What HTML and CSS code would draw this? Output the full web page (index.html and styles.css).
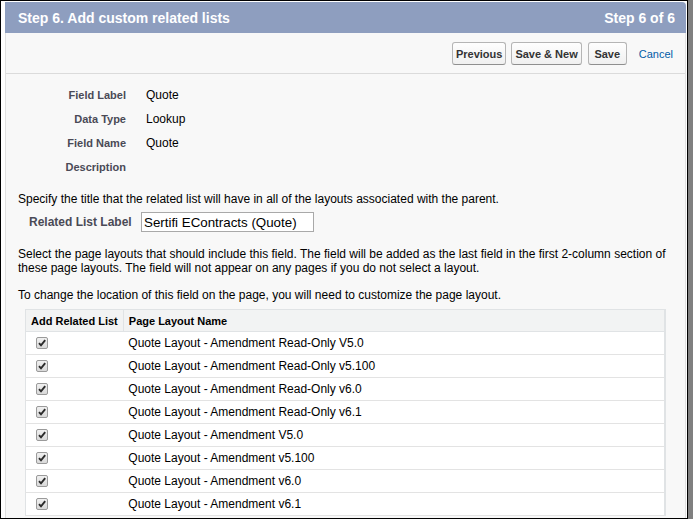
FILE: index.html
```html
<!DOCTYPE html>
<html>
<head>
<meta charset="utf-8">
<link rel="stylesheet" href="styles.css">
</head>
<body>
<div class="window">
  <div class="panel">
    <div class="pb-header">
      <h2 class="pb-title">Step 6. Add custom related lists</h2>
      <span class="pb-step">Step 6 of 6</span>
    </div>
    <div class="pb-body">
      <div class="btn-row">
        <button class="btn">Previous</button>
        <button class="btn">Save &amp; New</button>
        <button class="btn btn-save">Save</button>
        <a class="cancel" href="#">Cancel</a>
      </div>
      <div class="detail">
        <div class="lbl">Field Label</div><div class="val">Quote</div>
        <div class="lbl">Data Type</div><div class="val">Lookup</div>
        <div class="lbl">Field Name</div><div class="val">Quote</div>
        <div class="lbl">Description</div><div class="val"></div>
      </div>
      <p class="txt spec">Specify the title that the related list will have in all of the layouts associated with the parent.</p>
      <div class="rl-row">
        <label class="rl-label">Related List Label</label>
        <input class="rl-input" type="text" value="Sertifi EContracts (Quote)">
      </div>
      <p class="txt sel">Select the page layouts that should include this field. The field will be added as the last field in the first 2-column section of these page layouts. The field will not appear on any pages if you do not select a layout.</p>
      <p class="txt chg">To change the location of this field on the page, you will need to customize the page layout.</p>
      <table class="list">
        <thead>
          <tr><th class="c1">Add Related List</th><th class="c2">Page Layout Name</th></tr>
        </thead>
        <tbody>
          <tr><td class="c1"><span class="cb"><svg width="12" height="12" viewBox="0 0 12 12"><path d="M3 6.2 L5 8.4 L9.2 3.2" fill="none" stroke="#2b2b2b" stroke-width="1.9"/></svg></span></td><td class="c2">Quote Layout - Amendment Read-Only V5.0</td></tr>
          <tr><td class="c1"><span class="cb"><svg width="12" height="12" viewBox="0 0 12 12"><path d="M3 6.2 L5 8.4 L9.2 3.2" fill="none" stroke="#2b2b2b" stroke-width="1.9"/></svg></span></td><td class="c2">Quote Layout - Amendment Read-Only v5.100</td></tr>
          <tr><td class="c1"><span class="cb"><svg width="12" height="12" viewBox="0 0 12 12"><path d="M3 6.2 L5 8.4 L9.2 3.2" fill="none" stroke="#2b2b2b" stroke-width="1.9"/></svg></span></td><td class="c2">Quote Layout - Amendment Read-Only v6.0</td></tr>
          <tr><td class="c1"><span class="cb"><svg width="12" height="12" viewBox="0 0 12 12"><path d="M3 6.2 L5 8.4 L9.2 3.2" fill="none" stroke="#2b2b2b" stroke-width="1.9"/></svg></span></td><td class="c2">Quote Layout - Amendment Read-Only v6.1</td></tr>
          <tr><td class="c1"><span class="cb"><svg width="12" height="12" viewBox="0 0 12 12"><path d="M3 6.2 L5 8.4 L9.2 3.2" fill="none" stroke="#2b2b2b" stroke-width="1.9"/></svg></span></td><td class="c2">Quote Layout - Amendment V5.0</td></tr>
          <tr><td class="c1"><span class="cb"><svg width="12" height="12" viewBox="0 0 12 12"><path d="M3 6.2 L5 8.4 L9.2 3.2" fill="none" stroke="#2b2b2b" stroke-width="1.9"/></svg></span></td><td class="c2">Quote Layout - Amendment v5.100</td></tr>
          <tr><td class="c1"><span class="cb"><svg width="12" height="12" viewBox="0 0 12 12"><path d="M3 6.2 L5 8.4 L9.2 3.2" fill="none" stroke="#2b2b2b" stroke-width="1.9"/></svg></span></td><td class="c2">Quote Layout - Amendment v6.0</td></tr>
          <tr><td class="c1"><span class="cb"><svg width="12" height="12" viewBox="0 0 12 12"><path d="M3 6.2 L5 8.4 L9.2 3.2" fill="none" stroke="#2b2b2b" stroke-width="1.9"/></svg></span></td><td class="c2">Quote Layout - Amendment v6.1</td></tr>
        </tbody>
      </table>
    </div>
  </div>
</div>
</body>
</html>
```

FILE: styles.css
```css
html, body {
  margin: 0;
  padding: 0;
  background: #808080;
  font-family: "Liberation Sans", Arial, sans-serif;
  overflow: hidden;
}
.window {
  box-sizing: border-box;
  width: 688px;
  height: 519px;
  border: 1px solid #000;
  background: #fff;
  padding: 1px 1px 0 4px;
  overflow: hidden;
}
.panel {
  background: #f8f8f8;
  height: 600px;
}
.pb-header {
  height: 31px;
  background: #8e9ebf;
  border-radius: 0 4px 0 0;
  display: flex;
  align-items: center;
  justify-content: space-between;
  padding: 0 11px 0 13px;
  color: #fff;
  font-weight: bold;
  font-size: 14px;
}
.pb-title {
  margin: 0;
  font-size: 14px;
  font-weight: bold;
}
.pb-body {
  border-left: 1px solid #e0e0e0;
  border-right: 1px solid #e0e0e0;
  height: 600px;
}
.btn-row {
  display: flex;
  justify-content: flex-end;
  align-items: center;
  padding: 9px 12px 8px 0;
  border-bottom: 1px solid #dbdbdb;
}
.btn {
  font-family: "Liberation Sans", Arial, sans-serif;
  font-size: 11px;
  font-weight: bold;
  color: #333;
  height: 23px;
  padding: 0 3px;
  margin-left: 5px;
  border: 1px solid #b5b5b5;
  border-bottom-color: #8f8f8f;
  border-radius: 3px;
  background: linear-gradient(#fefefe, #f0f0f0);
}
.btn-save {
  min-width: 39px;
  margin-left: 6px;
}
.cancel {
  margin-left: 12px;
  font-size: 11px;
  color: #015ba7;
  text-decoration: none;
}
.detail {
  display: grid;
  grid-template-columns: 120px 1fr;
  grid-auto-rows: 24px;
  column-gap: 20px;
  padding-top: 9px;
  align-items: center;
}
.lbl {
  text-align: right;
  font-size: 11px;
  font-weight: bold;
  color: #4a4a56;
}
.val {
  font-size: 12px;
  color: #000;
}
.txt {
  margin: 0;
  padding-left: 12px;
  font-size: 12px;
  line-height: 14px;
  color: #000;
}
.spec {
  margin-top: 13px;
}
.rl-row {
  display: flex;
  align-items: center;
  margin-top: 6px;
  padding-left: 23px;
}
.rl-label {
  font-size: 12px;
  font-weight: bold;
  color: #4a4a56;
  width: 112px;
}
.rl-input {
  box-sizing: border-box;
  width: 173px;
  height: 20px;
  border: 1px solid #a9a9a9;
  background: #fff;
  font-family: "Liberation Sans", Arial, sans-serif;
  font-size: 13.33px;
  padding: 0 2px;
  color: #000;
}
.sel {
  margin-top: 15px;
}
.chg {
  margin-top: 13px;
}
.list {
  margin: 7px 0 0 19px;
  width: 641px;
  border-collapse: collapse;
  background: #fff;
  border: 1px solid #e0e3e5;
  border-right-width: 2px;
}
.list th {
  height: 21px;
  background: #f2f3f3;
  border-bottom: 1px solid #e0e3e5;
  font-size: 11px;
  font-weight: bold;
  color: #000;
  text-align: left;
  padding: 0 5px;
  white-space: nowrap;
}
.list th.c1 {
  border-right: 1px solid #e0e3e5;
  width: 86px;
}
.list td {
  height: 22px;
  border-bottom: 1px solid #e3e3e3;
  font-size: 12px;
  color: #000;
  padding: 0 5px;
}
.list td.c1 {
  padding-left: 10px;
}
.cb {
  display: block;
  width: 12px;
  height: 12px;
  box-sizing: border-box;
  border: 1px solid #9a9a9a;
  border-radius: 2px;
  background: linear-gradient(#f0f0f0, #d9d9d9);
  position: relative;
}
.cb svg {
  position: absolute;
  left: -1px;
  top: -1px;
}
```
